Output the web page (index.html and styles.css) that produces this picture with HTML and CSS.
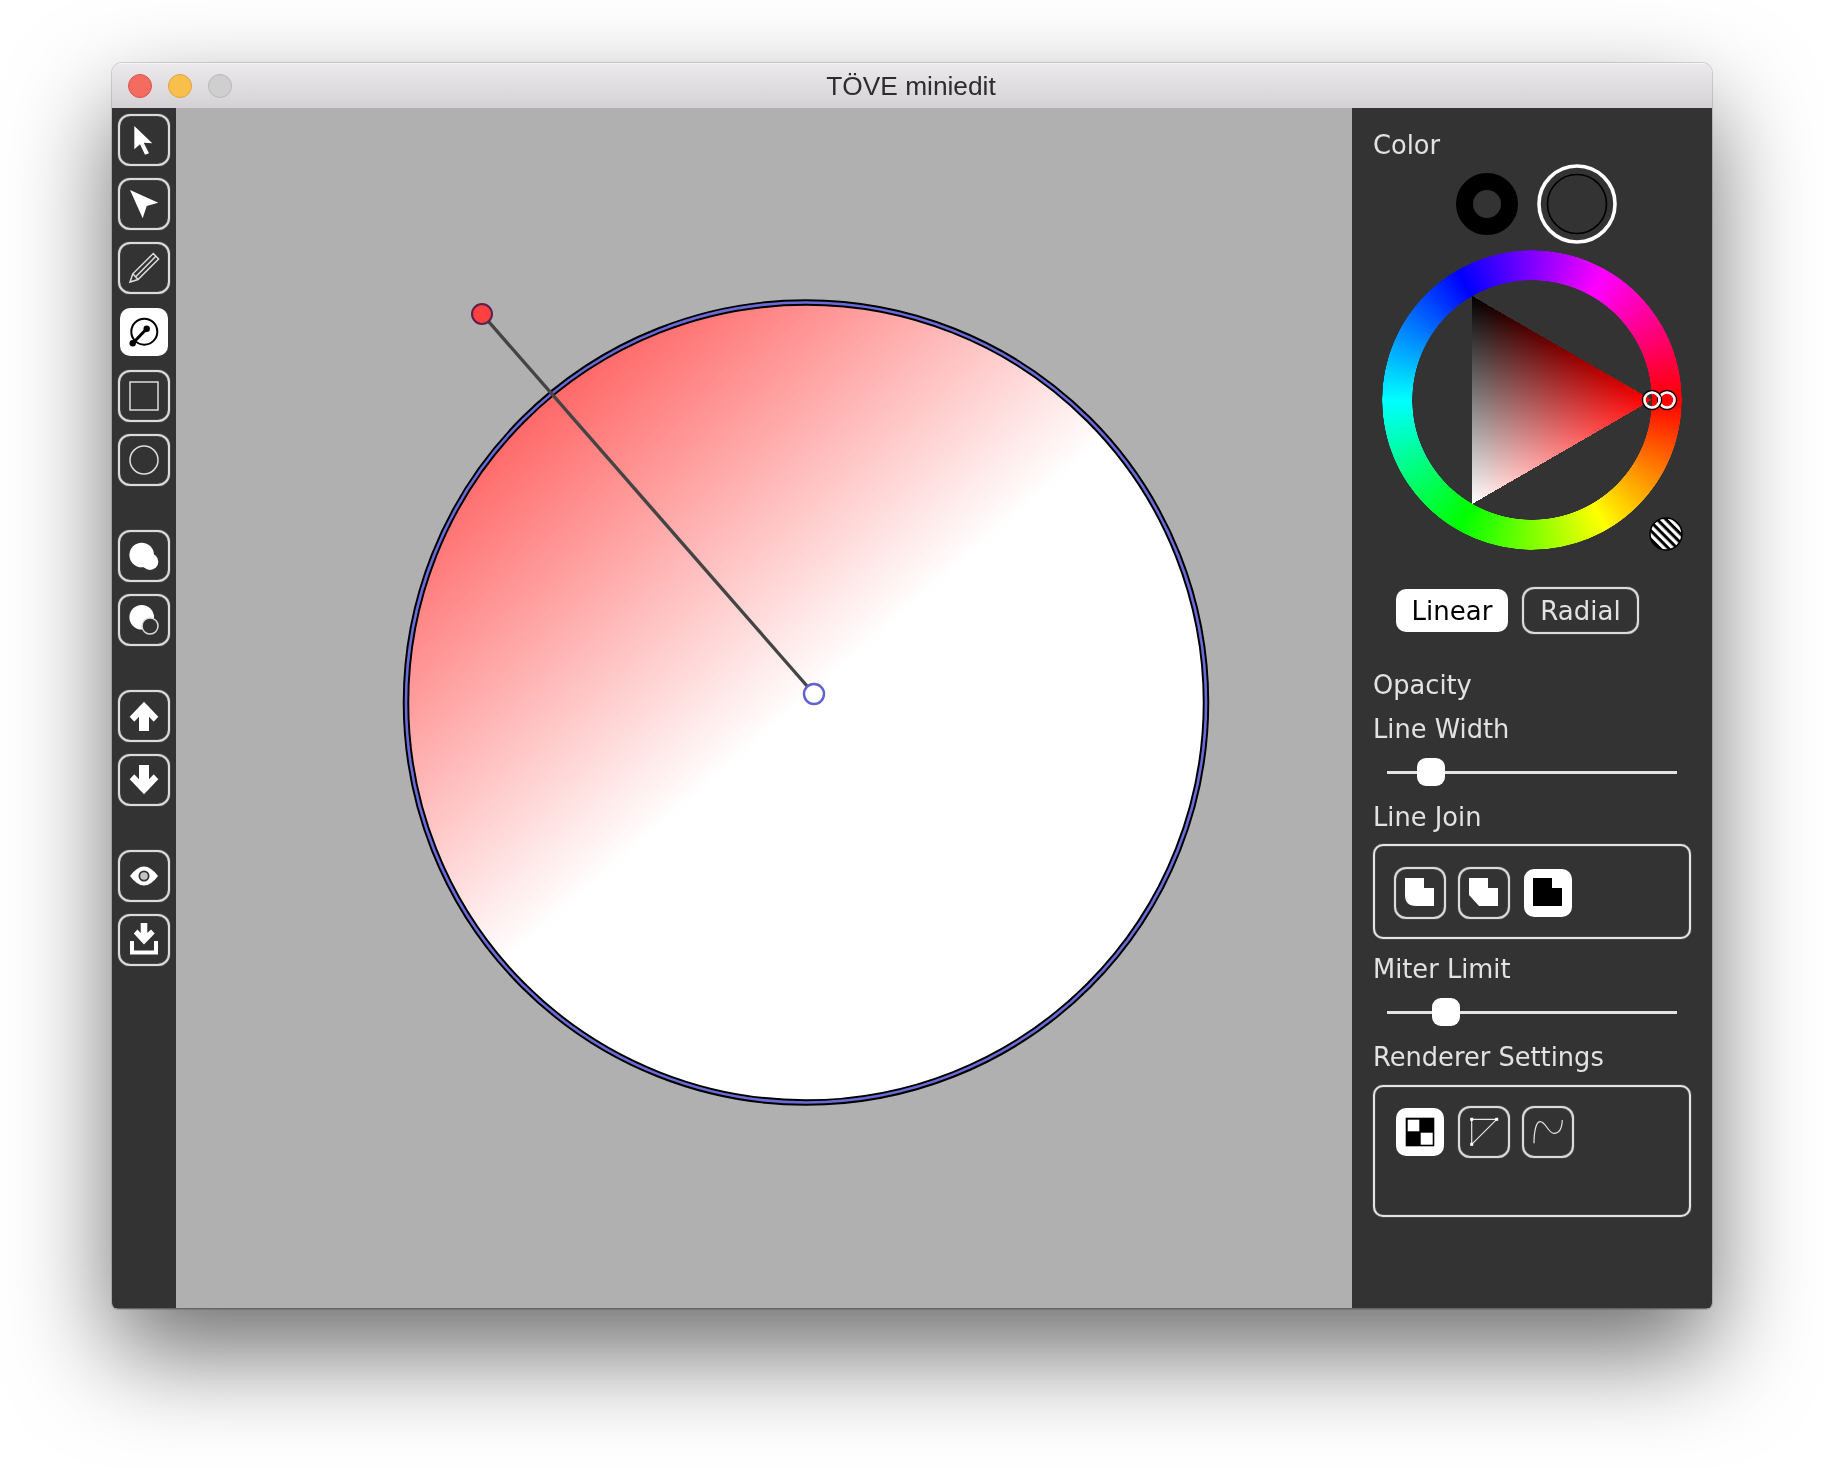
FILE: index.html
```html
<!DOCTYPE html>
<html lang="en">
<head>
<meta charset="utf-8">
<title>TÖVE miniedit</title>
<link rel="stylesheet" href="styles.css">
</head>
<body>
<main class="window">
  <header class="titlebar">
    <div class="lights">
      <span class="light light-red"></span>
      <span class="light light-yellow"></span>
      <span class="light light-grey"></span>
    </div>
    <div class="title">TÖVE miniedit</div>
    <div></div>
  </header>
  <div class="body">
    <nav class="toolbar">
      <div class="tool-group">
        <button class="btn"><svg viewBox="0 0 48 48"><polygon class="w" points="14.3,10 32.3,27.3 23.7,26.7 29,37.3 25,38.7 20,28.3 14.3,33.3"/></svg></button>
        <button class="btn"><svg viewBox="0 0 48 48"><polygon class="w" points="10,10 38.3,22.7 26.7,26 22.7,38.3"/></svg></button>
        <button class="btn"><svg viewBox="0 0 48 48"><path class="ol" d="M10 38l2.8-8.2L33.3 9.5l5.3 5.5L18 35.5z"/><path class="ol" d="M16 32.5L35.8 12.3M12.8 29.8l5.2 5.7"/></svg></button>
        <button class="btn on"><svg viewBox="0 0 48 48"><circle class="k-ol" cx="24.3" cy="23.7" r="13"/><path class="k-line" d="M12.7 35.3L26.7 20.7"/><circle class="k" cx="12.7" cy="35.3" r="3.2"/><circle class="k" cx="26.7" cy="20.7" r="3.2"/></svg></button>
        <button class="btn"><svg viewBox="0 0 48 48"><rect class="ol" x="10" y="10" width="28" height="28"/></svg></button>
        <button class="btn"><svg viewBox="0 0 48 48"><circle class="ol" cx="24" cy="24" r="14"/></svg></button>
      </div>
      <div class="tool-group">
        <button class="btn"><svg viewBox="0 0 48 48"><circle class="w" cx="21.7" cy="23" r="12.3"/><circle class="w" cx="30" cy="29.7" r="8.3"/></svg></button>
        <button class="btn"><svg viewBox="0 0 48 48"><circle class="w" cx="21.7" cy="21.3" r="12.3"/><circle class="ol dark" cx="30" cy="30" r="8"/></svg></button>
      </div>
      <div class="tool-group">
        <button class="btn"><svg viewBox="0 0 48 48"><polygon class="w" points="24,9.7 38.3,24.7 33.7,29.7 29,24.7 29,39 19,39 19,24.7 14.3,29.7 9.7,24.7"/></svg></button>
        <button class="btn"><svg viewBox="0 0 48 48"><polygon class="w" points="24,38.3 38.3,23.3 33.7,18.3 29,23.3 29,9 19,9 19,23.3 14.3,18.3 9.7,23.3"/></svg></button>
      </div>
      <div class="tool-group">
        <button class="btn"><svg viewBox="0 0 48 48"><path class="w" d="M10 24Q17 14.5 24 14.5Q31 14.5 38 24Q31 33.5 24 33.5Q17 33.5 10 24Z"/><circle class="dark-fill" cx="24" cy="24" r="5.5"/><circle class="grey-fill" cx="24" cy="24" r="3.8"/></svg></button>
        <button class="btn"><svg viewBox="0 0 48 48"><path class="w" d="M10 25H14V34.500H34V25H38V38.500H10Z"/><path class="w" d="M20.700 7h6.600v10l3.800-3.500 3.600 4L24 28.500 13.800 17.500l3.600-4 3.300 3.500z"/></svg></button>
      </div>
    </nav>

    <section class="canvas">
      <svg class="art" viewBox="176 108 1176 1200">
        <defs>
          <linearGradient id="fillgrad" gradientUnits="userSpaceOnUse" x1="482" y1="314" x2="814" y2="694">
            <stop offset="0" stop-color="#ff4040"/>
            <stop offset="1" stop-color="#ffffff"/>
          </linearGradient>
        </defs>
        <circle class="shape" cx="806" cy="702.500" r="400"/>
        <circle class="shape-outline" cx="806" cy="702.500" r="400"/>
        <line class="handle-line" x1="482" y1="314" x2="814" y2="694"/>
        <circle class="handle-start" cx="482" cy="314" r="10"/>
        <circle class="handle-end" cx="814" cy="694" r="10"/>
      </svg>
    </section>

    <aside class="panel">
      <div class="label label-color">Color</div>
      <div class="swatches">
        <svg class="swatch-fill" viewBox="0 0 62 62"><circle class="swatch-donut" cx="31" cy="31" r="22.500"/></svg>
        <svg class="swatch-stroke" viewBox="0 0 80 80"><circle class="swatch-ring" cx="40" cy="40" r="38"/><circle class="swatch-inner" cx="40" cy="40" r="29.500"/></svg>
      </div>
      <div class="picker">
        <div class="wheel"></div>
        <svg class="picker-over" viewBox="1382 250 300 300">
          <defs>
            <linearGradient id="g-red" gradientUnits="userSpaceOnUse" x1="1472" y1="400" x2="1652" y2="400">
              <stop offset="0" stop-color="#000"/><stop offset="1" stop-color="#f00"/>
            </linearGradient>
            <linearGradient id="g-white" gradientUnits="userSpaceOnUse" x1="1562" y1="348" x2="1472" y2="504">
              <stop offset="0" stop-color="#000"/><stop offset="1" stop-color="#fff"/>
            </linearGradient>
            <pattern id="stripes" patternUnits="userSpaceOnUse" width="6.200" height="6.200" patternTransform="rotate(45)">
              <rect width="6.200" height="6.200" fill="#fff"/>
              <rect width="6.200" height="3" fill="#000"/>
            </pattern>
          </defs>
          <polygon class="tri tri-base" points="1472,296 1652,400 1472,504"/>
          <polygon class="tri tri-white" points="1472,296 1652,400 1472,504"/>
          <polygon class="tri tri-red" points="1472,296 1652,400 1472,504"/>
          <circle class="knob-out" cx="1667" cy="400" r="9.500"/>
          <circle class="knob-in" cx="1667" cy="400" r="7.500"/>
          <circle class="knob-out" cx="1652" cy="400" r="9.500"/>
          <circle class="knob-in" cx="1652" cy="400" r="7.500"/>
          <circle class="striped" cx="1666" cy="534" r="16"/>
        </svg>
      </div>
      <div class="tabs">
        <button class="tab on">Linear</button>
        <button class="tab">Radial</button>
      </div>
      <div class="label label-opacity">Opacity</div>
      <div class="label label-width">Line Width</div>
      <div class="slider slider-width"><span class="knob" style="left:30px"></span></div>
      <div class="label label-join">Line Join</div>
      <div class="box box-join">
        <button class="btn"><svg viewBox="0 0 48 48"><path class="w" d="M9 9H28V19H38V37H20Q9 37 9 26Z"/></svg></button>
        <button class="btn"><svg viewBox="0 0 48 48"><path class="w" d="M9 9H28V19H38V37H19L9 26Z"/></svg></button>
        <button class="btn on"><svg viewBox="0 0 48 48"><path class="k" d="M9 9H28V19H38V37H9Z"/></svg></button>
      </div>
      <div class="label label-miter">Miter Limit</div>
      <div class="slider slider-miter"><span class="knob" style="left:45px"></span></div>
      <div class="label label-render">Renderer Settings</div>
      <div class="box box-render">
        <button class="btn on"><svg viewBox="0 0 48 48"><rect class="k" x="9.700" y="9.700" width="28.600" height="28.600"/><rect class="w" x="11.700" y="11.700" width="11.600" height="11.600"/><rect class="w" x="24.700" y="24.700" width="12" height="12"/></svg></button>
        <button class="btn"><svg viewBox="0 0 48 48"><path class="thin" d="M11.700 11.300H36.700L11.700 36.300Z"/><rect class="w" x="10.200" y="9.800" width="3" height="3"/><rect class="w" x="35.200" y="9.800" width="3" height="3"/><rect class="w" x="10.200" y="34.800" width="3" height="3"/></svg></button>
        <button class="btn"><svg viewBox="0 0 48 48"><path class="thin" d="M10 35.300C10 24 12 13.700 16 13.700C22 13.700 24 25.300 30 25.300C35 25.300 38 20 38.300 12"/></svg></button>
      </div>
    </aside>
  </div>
</main>
</body>
</html>
```

FILE: styles.css
```css
* { box-sizing: border-box; }
html, body { margin: 0; background: #fff; }
body { padding: 63px 112px 159px; height: 1468px; overflow: hidden; }

.window {
  width: 1600px;
  height: 1246px;
  display: flex;
  flex-direction: column;
  border-radius: 10px 10px 6px 6px;
  overflow: hidden;
  box-shadow: 0 0 0 1px rgba(0,0,0,.14), 0 44px 100px rgba(0,0,0,.57);
}

.titlebar {
  flex: none;
  height: 45px;
  display: grid;
  grid-template-columns: 1fr auto 1fr;
  align-items: center;
  background: linear-gradient(#ebe9eb, #d4d2d4);
  border-top: 1px solid #f5f5f5;
}
.lights { display: flex; gap: 16px; padding-left: 16px; }
.light { width: 24px; height: 24px; border-radius: 50%; border: 1px solid; }
.light-red { background: #f46b60; border-color: #d9564c; }
.light-yellow { background: #f8bf4c; border-color: #dfa43a; }
.light-grey { background: #d0cfd0; border-color: #b8b7b8; }
.title {
  font: 26.3px "Liberation Sans", Arial, sans-serif;
  color: #2e2c30;
  position: relative;
  left: -1px;
}

.body { flex: 1; display: flex; min-height: 0; border-bottom: 1px solid #666; }

.toolbar {
  flex: none;
  width: 64px;
  background: #333;
  padding: 6px 0 0 6px;
  display: flex;
  flex-direction: column;
  gap: 44px;
}
.tool-group { display: flex; flex-direction: column; gap: 12px; }

.btn {
  width: 52px;
  height: 52px;
  padding: 0;
  display: block;
  background: transparent;
  border: 2px solid #dcdcdc;
  border-radius: 12px;
  box-shadow: 0 0 1px #dcdcdc, inset 0 0 1px #dcdcdc;
}
.btn svg { display: block; width: 48px; height: 48px; }
.btn.on {
  background: #fff;
  background-clip: padding-box;
  border-color: transparent;
  box-shadow: none;
}

.w { fill: #fff; }
.k { fill: #000; }
.ol { fill: none; stroke: #dcdcdc; stroke-width: 1.5; }
.ol.dark { fill: #333; }
.thin { fill: none; stroke: #e6e6e6; stroke-width: 1.2; }
.k-ol { fill: none; stroke: #000; stroke-width: 2; }
.k-line { fill: none; stroke: #000; stroke-width: 3; }
.dark-fill { fill: #333; }
.grey-fill { fill: #c4c4c4; }

.canvas { flex: 1; min-width: 0; background: #b0b0b0; }
.art { display: block; width: 100%; height: 100%; }
.shape { fill: url(#fillgrad); stroke: #000; stroke-width: 6.5; }
.shape-outline { fill: none; stroke: #6a6ad8; stroke-width: 2.6; }
.handle-line { stroke: #444; stroke-width: 3.4; }
.handle-start { fill: #ff4040; stroke: #5a2050; stroke-width: 2; }
.handle-end { fill: #fff; stroke: #6060d0; stroke-width: 2.4; }

.panel {
  flex: none;
  width: 360px;
  background: #333;
  padding-top: 22px;
}
.label {
  height: 30px;
  margin-left: 21px;
  font: 25.7px/30px "DejaVu Sans", sans-serif;
  color: #e2e2e2;
  white-space: nowrap;
}
.swatches {
  display: flex;
  align-items: center;
  gap: 19px;
  margin: 4px 0 0 104px;
}
.swatch-fill { width: 62px; height: 62px; display: block; }
.swatch-stroke { width: 80px; height: 80px; display: block; }
.swatch-donut { fill: none; stroke: #000; stroke-width: 17; }
.swatch-ring { fill: none; stroke: #fff; stroke-width: 3.6; }
.swatch-inner { fill: none; stroke: #000; stroke-width: 1.6; }

.picker { position: relative; width: 300px; height: 300px; margin: 6px 0 0 30px; }
.wheel {
  width: 300px;
  height: 300px;
  border-radius: 50%;
  background: conic-gradient(from 90deg, #f00, #ff0, #0f0, #0ff, #00f, #f0f, #f00);
  -webkit-mask: radial-gradient(circle, transparent 119.5px, #000 120px, #000 149.5px, transparent 150px);
  mask: radial-gradient(circle, transparent 119.5px, #000 120px, #000 149.5px, transparent 150px);
}
.picker-over {
  position: absolute;
  left: 0;
  top: 0;
  width: 300px;
  height: 300px;
  overflow: visible;
}
.tri { shape-rendering: crispEdges; }
.tri-base { fill: #000; }
.tri-white { fill: url(#g-white); }
.tri-red { fill: url(#g-red); mix-blend-mode: plus-lighter; }
.knob-out { fill: none; stroke: #000; stroke-width: 1.5; }
.knob-in { fill: none; stroke: #fff; stroke-width: 2.6; }
.striped { fill: url(#stripes); stroke: #000; stroke-width: 1.5; }

.tabs { display: flex; gap: 12px; margin: 37px 0 0 42px; }
.tab {
  height: 47px;
  width: 117px;
  padding: 0;
  background: transparent;
  border: 2px solid #dcdcdc;
  border-radius: 12px;
  box-shadow: 0 0 1px #dcdcdc, inset 0 0 1px #dcdcdc;
  font: 26px "DejaVu Sans", sans-serif;
  color: #e2e2e2;
}
.tab.on {
  width: 116px;
  background: #fff;
  background-clip: padding-box;
  border-color: transparent;
  box-shadow: none;
  color: #000;
}

.label-opacity { margin-top: 36px; }
.label-width { margin-top: 14px; }
.label-join { margin-top: 16px; }
.label-miter { margin-top: 15px; }
.label-render { margin-top: 16px; }

.slider {
  position: relative;
  width: 290px;
  height: 28px;
  margin-left: 35px;
  margin-top: 14px;
  background: linear-gradient(#e4e4e4, #e4e4e4) center / 100% 3px no-repeat;
}
.knob {
  position: absolute;
  top: 0;
  width: 28px;
  height: 28px;
  border-radius: 9px;
  background: #fff;
}

.box {
  width: 318px;
  margin-left: 21px;
  margin-top: 12px;
  border: 2px solid #e4e4e4;
  border-radius: 10px;
  box-shadow: 0 0 1px #e4e4e4, inset 0 0 1px #e4e4e4;
  display: flex;
  align-items: flex-start;
  gap: 12px;
  padding-left: 19px;
}
.box-join { height: 95px; padding-top: 21px; }
.box-render { height: 132px; padding-top: 19px; margin-top: 13px; }
```
